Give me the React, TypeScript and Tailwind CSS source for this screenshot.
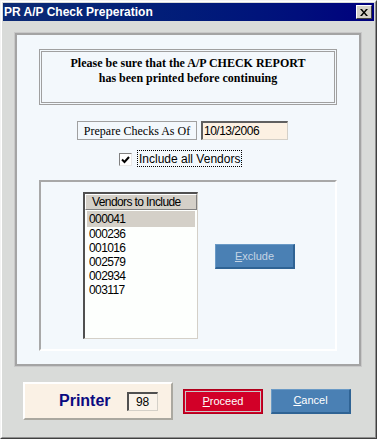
import React from "react";

const sans = { fontFamily: '"Liberation Sans", Arial, sans-serif' };
const serif = { fontFamily: '"Liberation Serif", "Times New Roman", serif' };

const vendors = ["000041", "000236", "001016", "002579", "002934", "003117"];

export default function App() {
    return (
        <div
            className="w-[377px] h-[439px] bg-[#d9dbd9] border-t border-l border-[#f4f4f4] border-r border-b border-r-[#404040] border-b-[#404040]"
            style={sans}
        >
            <div className="h-full border-t border-l border-white border-r border-b border-r-[#909090] border-b-[#909090] p-[1px] flex flex-col">
                {/* title bar */}
                <div className="h-[18px] flex items-center justify-between bg-gradient-to-r from-[#0c2a74] to-[#00007e] pl-[1px] pr-[2px]">
                    <span className="text-white font-bold text-[12px] leading-none">PR A/P Check Preperation</span>
                    <div className="w-[16px] h-[14px] bg-[#d4d0c8] border-t border-l border-white border-r border-b border-r-[#404040] border-b-[#404040] flex items-center justify-center">
                        <svg width="8" height="7" viewBox="0 0 8 7">
                            <path d="M0 0h2l2 2.5L6 0h2L5 3.5 8 7H6L4 4.5 2 7H0l3-3.5z" fill="#000" />
                        </svg>
                    </div>
                </div>

                {/* main panel */}
                <div className="mt-[11px] ml-[11px] mr-[12px] h-[335px] border border-[#c8c8c8]">
                    <div className="h-full border-2 border-[#a4a4a4] bg-[#f3f8fc] flex flex-col">
                        <div className="mt-[14px] mx-[22px] h-[56px] border-[3px] border-double border-[#a0a0a0] pt-[4px] text-center text-[12px] leading-[15px] font-bold text-black" style={serif}>
                            <div>Please be sure that the A/P CHECK REPORT</div>
                            <div>has been printed before continuing</div>
                        </div>

                        <div className="mt-[16px] ml-[60px] flex items-center gap-[4px]">
                            <div className="w-[120px] h-[19px] border border-[#a0a0a0] bg-[#f3f8fc] flex items-center justify-center text-[12px] text-black" style={serif}>
                                Prepare Checks As Of
                            </div>
                            <div className="w-[87px] h-[19px] bg-[#fcf1e3] border-t-2 border-l-2 border-t-[#606060] border-l-[#606060] border-r border-b border-r-[#d4d0c8] border-b-[#d4d0c8] pl-[1px] flex items-center text-[12px] tracking-[-0.5px] text-black">
                                10/13/2006
                            </div>
                        </div>

                        <div className="mt-[10px] ml-[102px] h-[17px] flex items-center">
                            <div className="w-[13px] h-[13px] bg-white border-t border-l border-[#808080] border-r border-b border-r-[#e8e8e8] border-b-[#e8e8e8] flex items-center justify-center mt-[2px]">
                                <svg width="9" height="8" viewBox="0 0 9 8">
                                    <path d="M1 3.5L3.5 6 8 1" stroke="#000" strokeWidth="2" fill="none" />
                                </svg>
                            </div>
                            <div className="ml-[5px] h-[17px] px-[1px] border border-dotted border-black flex items-center text-[12px] text-black">
                                Include all Vendors
                            </div>
                        </div>

                        <div className="mt-[13px] mx-[22px] h-[171px] border-t-2 border-l-2 border-[#a8a8a8] border-r-2 border-b-2 border-r-white border-b-white flex items-start">
                            <div className="ml-[42px] mt-[10px] w-[115px] h-[147px] border-t-2 border-l-2 border-[#505050] border-r border-b border-r-[#d4d0c8] border-b-[#d4d0c8] bg-[#fdfffd] flex flex-col">
                                <div className="h-[16px] bg-[#d4d0c8] border-t border-l border-white border-r border-b border-r-[#808080] border-b-[#808080] pl-[6px] flex items-center text-[12px] tracking-[-0.6px] text-black">
                                    Vendors to Include
                                </div>
                                <div className="px-[2px] pt-[1px] flex flex-col">
                                    {vendors.map((v, i) => (
                                        <div
                                            key={v}
                                            className={`pl-[2px] flex items-center text-[12px] tracking-[-0.6px] text-black ${i === 0 ? "h-[16px] bg-[#d4d0c8]" : "h-[14px]"}`}
                                        >
                                            {v}
                                        </div>
                                    ))}
                                </div>
                            </div>
                            <div className="ml-[17px] mt-[62px] w-[80px] h-[25px] bg-[#4a80b4] border-t border-l border-[#6a9ac6] border-r-2 border-b-2 border-r-[#2f6394] border-b-[#2f6394] flex items-center justify-center text-[11px] text-[#c4d4e4]">
                                <span><span className="underline">E</span>xclude</span>
                            </div>
                        </div>
                    </div>
                </div>

                {/* bottom row */}
                <div className="mt-[15px] ml-[20px] h-[38px] flex items-center">
                    <div className="w-[150px] h-[38px] bg-[#faf1e5] border-t-2 border-l-2 border-white border-r-2 border-b-2 border-r-[#aaa8a0] border-b-[#aaa8a0] pl-[34px] flex items-center">
                        <span className="text-[16px] font-bold text-[#0a0a80]">Printer</span>
                        <div className="ml-[16px] w-[31px] h-[19px] bg-[#faf3ea] border-t-2 border-l-2 border-[#505050] border-r border-b border-r-[#d4d0c8] border-b-[#d4d0c8] flex items-center justify-center text-[12px] text-black">
                            98
                        </div>
                    </div>
                    <div className="ml-[10px] w-[80px] h-[25px] bg-[#d20028] border border-[#b0001c] p-[1px]">
                        <div className="w-full h-full border border-[#c8c8c8] flex items-center justify-center text-[11px] text-white">
                            <span><span className="underline">P</span>roceed</span>
                        </div>
                    </div>
                    <div className="ml-[8px] w-[80px] h-[25px] bg-[#4a80b4] border-t border-l border-[#6a9ac6] border-r-2 border-b-2 border-r-[#2f6394] border-b-[#2f6394] flex items-center justify-center text-[11px] text-white">
                        <span><span className="underline">C</span>ancel</span>
                    </div>
                </div>
            </div>
        </div>
    );
}
